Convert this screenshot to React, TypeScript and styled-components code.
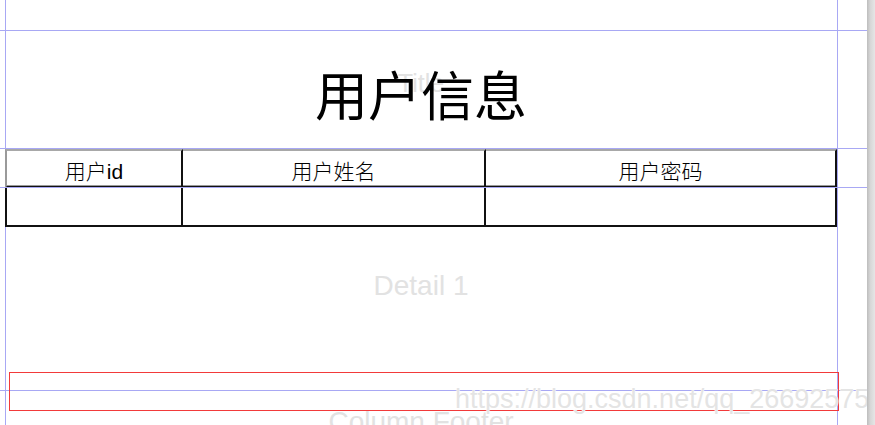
import styled, { createGlobalStyle } from 'styled-components'

const GlobalStyle = createGlobalStyle`
  html, body {
    margin: 0;
    padding: 0;
    background: #ffffff;
    overflow: hidden;
  }
  #root {
    height: 425px;
  }
`;

const Workspace = styled.div`
  display: flex;
  width: 875px;
  height: 425px;
  overflow: hidden;
`;

const Canvas = styled.div`
  position: relative;
  width: 867px;
  height: 425px;
  overflow: hidden;
  background: #fff;
`;

const ScrollTrack = styled.div`
  flex: 1;
  background: linear-gradient(to right, #bdbdbd, #d6d6d6 40%, #e6e6e6);
`;

const VGuide = styled.div<{ $left: number }>`
  position: absolute;
  top: 0;
  bottom: 0;
  left: ${p => p.$left}px;
  width: 1px;
  background: #a8a8f4;
  z-index: 0;
`;

const Band = styled.section<{ $h: number; $guide?: boolean }>`
  position: relative;
  height: ${p => p.$h}px;
  box-sizing: border-box;
  border-top: ${p => (p.$guide ? '1px solid #a8a8f4' : 'none')};
  z-index: 1;
`;

const BandInner = styled.div`
  margin-left: 5px;
  width: 832px;
  height: 100%;
  position: relative;
`;

const BandLabel = styled.div<{ $size: number; $dy?: number }>`
  position: absolute;
  left: 0;
  right: 0;
  top: 0;
  bottom: 0;
  display: flex;
  align-items: center;
  justify-content: center;
  padding-bottom: ${p => p.$dy ?? 0}px;
  font-family: "Liberation Sans", Arial, sans-serif;
  font-size: ${p => p.$size}px;
  color: #e2e2e2;
  pointer-events: none;
`;

const TitleText = styled.h1`
  position: relative;
  margin: 0;
  height: 100%;
  display: flex;
  align-items: center;
  justify-content: center;
  padding-top: 6px;
  box-sizing: border-box;
  font-family: "Noto Sans CJK SC", "Liberation Serif", serif;
  font-weight: 400;
  font-size: 53px;
  color: #000;
`;

const Row = styled.div`
  display: grid;
  grid-template-columns: 178px 303px 351px;
  width: 832px;
  height: 39px;
  box-sizing: border-box;
  background: #fff;
`;

const Cell = styled.div<{ $head?: boolean; $first?: boolean }>`
  box-sizing: border-box;
  border-right: 2px solid #111;
  border-bottom: 2px solid #111;
  border-left: ${p => (p.$first ? `2px solid ${p.$head ? '#9a9a9a' : '#111'}` : 'none')};
  border-top: ${p => (p.$head ? '2px solid #a8a8a8' : 'none')};
  box-shadow: ${p => (p.$head ? 'inset 0 -1px 0 #9a9a9a' : 'none')};
  display: flex;
  align-items: center;
  justify-content: center;
  padding-top: 2px;
  font-family: "Liberation Sans", "Noto Sans CJK SC", sans-serif;
  font-weight: 300;
  font-size: 21px;
  color: #000;
`;

const Selection = styled.div`
  position: absolute;
  left: 9px;
  top: 372px;
  width: 830px;
  height: 39px;
  box-sizing: border-box;
  border: 1px solid #f23a3a;
  z-index: 3;
`;

const Watermark = styled.div`
  position: absolute;
  left: 455px;
  top: 384px;
  font-family: "Liberation Sans", Arial, sans-serif;
  font-size: 27px;
  color: rgba(225, 225, 225, 0.9);
  text-shadow: 0 0 1px #fff, 0 0 1px #fff;
  white-space: nowrap;
  z-index: 4;
`;

const columns = ['用户id', '用户姓名', '用户密码'];

export default function App() {
  return (
    <>
      <GlobalStyle />
      <Workspace>
        <Canvas>
          <VGuide $left={5} />
          <VGuide $left={837} />

          <Band $h={30} />

          <Band $h={118} $guide>
            <BandInner>
              <BandLabel $size={25} $dy={12}>Title</BandLabel>
              <TitleText>用户信息</TitleText>
            </BandInner>
          </Band>

          <Band $h={39} $guide>
            <BandInner>
              <Row>
                {columns.map((c, i) => (
                  <Cell key={c} $head $first={i === 0}>{c}</Cell>
                ))}
              </Row>
            </BandInner>
          </Band>

          <Band $h={203} $guide>
            <BandInner>
              <BandLabel $size={28} $dy={6}>Detail 1</BandLabel>
              <Row>
                {columns.map((c, i) => (
                  <Cell key={c} $first={i === 0} />
                ))}
              </Row>
            </BandInner>
          </Band>

          <Band $h={70} $guide>
            <BandInner>
              <BandLabel $size={28} $dy={8}>Column Footer</BandLabel>
            </BandInner>
          </Band>

          <Selection />
          <Watermark>https://blog.csdn.net/qq_26692575</Watermark>
        </Canvas>
        <ScrollTrack />
      </Workspace>
    </>
  );
}
